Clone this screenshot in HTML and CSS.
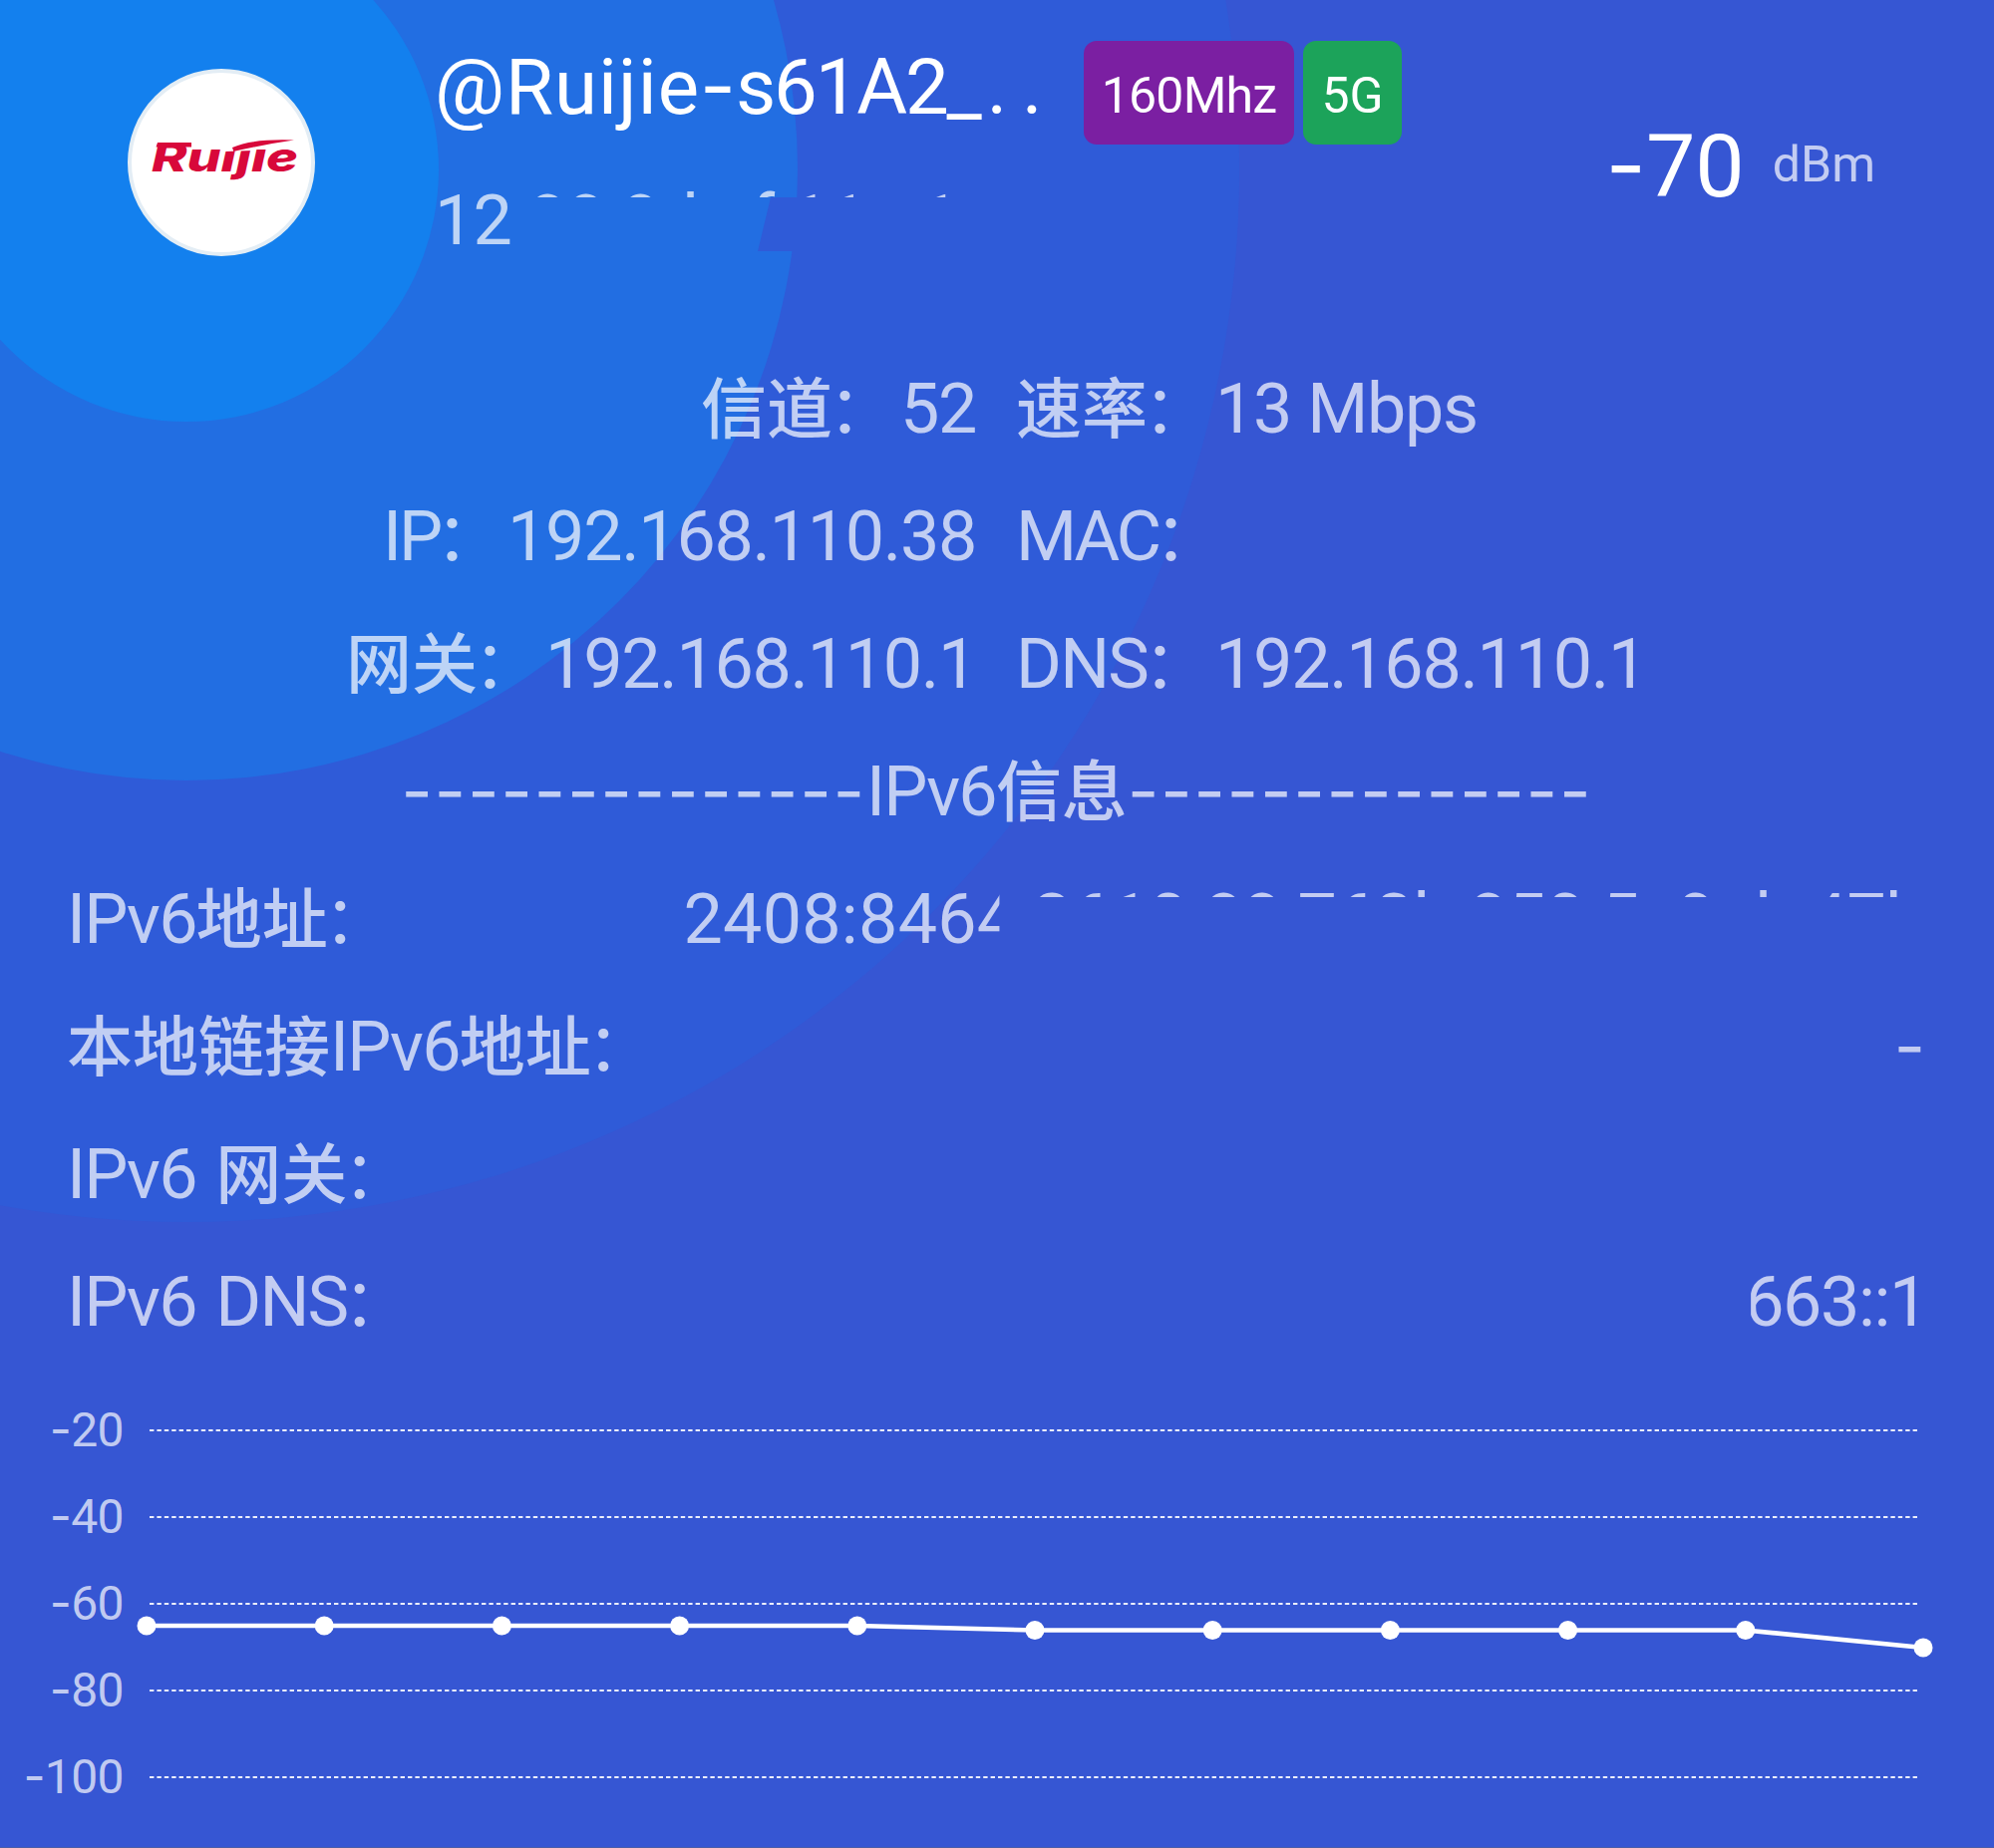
FILE: index.html
```html
<!DOCTYPE html>
<html lang="zh-CN">
<head>
<meta charset="utf-8">
<title>Wi-Fi 信息</title>
<link rel="stylesheet" href="styles.css">
</head>
<body>
<main class="panel">
  <svg class="rings" viewBox="0 0 2000 1854" aria-hidden="true">
    <circle cx="187" cy="170" r="1056" fill="#2f5bd8"/>
    <circle cx="187" cy="170" r="613" fill="#226ee2"/>
    <circle cx="187" cy="170" r="253" fill="#1380ee"/>
    <path d="M773 198H802V252H760Z" fill="#2f5bd8"/>
  </svg>

  <header class="head">
    <div class="avatar">
      <svg viewBox="0 0 180 180">
        <g fill="#d8083a">
          <text class="brand" x="20" y="99" textLength="147" lengthAdjust="spacingAndGlyphs">Ruijie</text>
          <path d="M26 70H60V74.500H24.500Z"/>
        </g>
        <path d="M93 62H170V71Q140 71 122 78L93 79Z" fill="#fff"/>
        <path d="M102 78L101 75Q120 66 163 67.500Q132 72 102 79Z" fill="#d8083a"/>
      </svg>
    </div>
    <div class="network">
      <div class="name-row">
        <h1 class="ssid"><span class="name-a">@Ruijie</span><span class="dash">-</span><span class="name-b">s61A2</span><span>_</span><span class="dots">. .</span></h1>
        <span class="badge badge-width">160Mhz</span>
        <span class="badge badge-band">5G</span>
      </div>
      <div class="bssid"><span class="num">12</span><span class="num cut-bssid">:88:8d:ef:11:a1</span></div>
    </div>
    <div class="signal">
      <span class="level"><span class="dash">-</span>70</span>
      <span class="unit">dBm</span>
    </div>
  </header>

  <section class="info">
    <div class="row pair">
      <div><span class="cn">信道</span><span class="cn colon">：</span><span class="num">52</span></div>
      <div><span class="cn">速率</span><span class="cn colon">：</span><span class="num">13 Mbps</span></div>
    </div>
    <div class="row pair">
      <div><span class="lat ip">IP</span><span class="cn colon">：</span><span class="num">192.168.110.38</span></div>
      <div><span class="lat mac">MAC</span><span class="cn colon">：</span></div>
    </div>
    <div class="row pair">
      <div><span class="cn">网关</span><span class="cn colon">：</span><span class="num">192.168.110.1</span></div>
      <div><span class="lat">DNS</span><span class="cn colon">：</span><span class="num">192.168.110.1</span></div>
    </div>
    <div class="row title"><span class="dash rule">--------------</span><span class="lat">IPv6</span><span class="cn">信息</span><span class="dash rule">--------------</span></div>
    <div class="row line">
      <div><span class="lat">IPv6</span><span class="cn">地址</span><span class="cn colon">：</span></div>
      <div class="addr"><span class="num cut-a">2408:8464</span><span class="num cut-b">:2610:88:763b:850:5a9:da47b</span></div>
    </div>
    <div class="row line">
      <div><span class="cn">本地链接</span><span class="lat">IPv6</span><span class="cn">地址</span><span class="cn colon">：</span></div>
      <div><span class="dash rule">-</span></div>
    </div>
    <div class="row line">
      <div><span class="lat">IPv6 </span><span class="cn">网关</span><span class="cn colon">：</span></div>
    </div>
    <div class="row line">
      <div><span class="lat">IPv6 DNS</span><span class="cn colon">：</span></div>
      <div><span class="num cut-dns">663::1</span></div>
    </div>
  </section>

  <section class="chart">
    <div class="axis">
      <span><i class="dash">-</i>20</span><span><i class="dash">-</i>40</span><span><i class="dash">-</i>60</span><span><i class="dash">-</i>80</span><span><i class="dash">-</i>100</span>
    </div>
    <svg class="plot" viewBox="124 1391 1876 435">
      <g stroke="#fff" stroke-opacity=".9" stroke-width="2" stroke-dasharray="4.4 3">
        <path d="M150 1435H1926"/><path d="M150 1522H1926"/><path d="M150 1609H1926"/><path d="M150 1696H1926"/><path d="M150 1783H1926"/>
      </g>
      <polyline fill="none" stroke="#fff" stroke-width="4.600" points="147,1631 325.200,1631 503.400,1631 681.600,1631 859.800,1631 1038,1635.500 1216.200,1635.500 1394.400,1635.500 1572.600,1635.500 1750.800,1635.500 1929,1653"/>
      <g fill="#fff">
        <circle cx="147" cy="1631" r="9.500"/><circle cx="325.200" cy="1631" r="9.500"/><circle cx="503.400" cy="1631" r="9.500"/><circle cx="681.600" cy="1631" r="9.500"/><circle cx="859.800" cy="1631" r="9.500"/><circle cx="1038" cy="1635.500" r="9.500"/><circle cx="1216.200" cy="1635.500" r="9.500"/><circle cx="1394.400" cy="1635.500" r="9.500"/><circle cx="1572.600" cy="1635.500" r="9.500"/><circle cx="1750.800" cy="1635.500" r="9.500"/><circle cx="1929" cy="1653" r="9.500"/>
      </g>
    </svg>
  </section>
</main>
</body>
</html>
```
FILE: styles.css
```css
* { box-sizing: border-box; }
body { margin: 0; }

.panel {
  position: relative;
  width: 2000px;
  height: 1854px;
  overflow: hidden;
  background: #3656d3;
  border-bottom: 1px solid #4a5da8;
  color: rgba(255, 255, 255, .7);
  font-family: Roboto, "Noto Sans CJK SC", sans-serif;
  font-size: 70px;
}
.rings {
  position: absolute;
  inset: 0;
  width: 2000px;
  height: 1854px;
}
.head, .info, .chart { position: relative; }

.ssid, .bssid, .title, .row > div { white-space: pre; }

.cn {
  font-family: "Noto Sans CJK SC", sans-serif;
  font-size: 66px;
  font-weight: 500;
  line-height: 1;
}
.colon { margin: 0 6px 0 -4px; font-weight: 400; }
.lat { letter-spacing: -1.8px; word-spacing: 4px; }
.ip { letter-spacing: -3px; }
.mac { letter-spacing: -3.2px; }
.num { letter-spacing: -.75px; }
.pair .num { letter-spacing: -1.3px; }
.dash {
  font-family: Inter, sans-serif;
  font-style: normal;
  line-height: 1;
}
.rule { font-size: 68px; letter-spacing: 2.05px; }

/* header */
.head {
  display: flex;
  height: 346px;
  padding-left: 128px;
}
.avatar {
  flex: none;
  width: 188px;
  height: 188px;
  margin-top: 69px;
  border: 4px solid #e3edf5;
  border-radius: 50%;
  background: #fff;
}
.avatar svg { display: block; width: 180px; height: 180px; }
.brand {
  font: italic 800 40px Inter, sans-serif;
}
.network {
  padding: 41px 0 0 118px;
}
.name-row {
  display: flex;
  height: 104px;
}
.ssid {
  width: 653px;
  margin: 0;
  padding-left: 2px;
  color: #fff;
  font-size: 78px;
  font-weight: 400;
  line-height: 94px;
}
.name-a { letter-spacing: 1px; }
.name-b { letter-spacing: -2.2px; }
.dots { padding-left: 5px; letter-spacing: -2.4px; }
.badge {
  height: 104px;
  padding-top: 6px;
  border-radius: 13px;
  color: #fff;
  font-size: 50px;
  line-height: 98px;
  text-align: center;
}
.badge-width { width: 211px; background: #7b1fa2; letter-spacing: -.8px; }
.badge-band { width: 99px; margin-left: 9px; background: #1ca35a; }
.bssid {
  padding-left: 2px;
  margin-top: 26px;
  line-height: 101px;
}
.cut-bssid {
  display: inline-block;
  clip-path: inset(0 0 74px 0);
}
.signal {
  display: flex;
  gap: 28px;
  margin-left: auto;
  padding: 117px 119px 0 0;
  line-height: 100px;
}
.level { color: #fff; font-size: 88px; }
.unit { font-size: 50px; line-height: 96px; }

/* details */
.row { height: 128px; line-height: 128px; }
.pair {
  display: grid;
  grid-template-columns: 979px 1fr;
  column-gap: 40px;
}
.pair > :first-child { text-align: right; }
.title { text-align: center; }
.line {
  display: flex;
  justify-content: space-between;
  padding: 0 67px;
}
.cut-a, .cut-b, .cut-dns { display: inline-block; }
.addr { padding-right: 3px; }
.cut-a { letter-spacing: .25px; clip-path: inset(0 17px 0 0); }
.cut-b { letter-spacing: -.55px; clip-path: inset(0 0 86px 0); }
.cut-dns { letter-spacing: -1.4px; clip-path: inset(0 0 0 6px); }

/* signal history */
.chart {
  display: flex;
  margin-top: 21px;
}
.axis {
  display: grid;
  grid-template-rows: repeat(5, 87px);
  width: 124px;
  font-size: 48px;
  line-height: 87px;
  text-align: right;
  letter-spacing: -.6px;
}
.plot { width: 1876px; height: 435px; }
```
